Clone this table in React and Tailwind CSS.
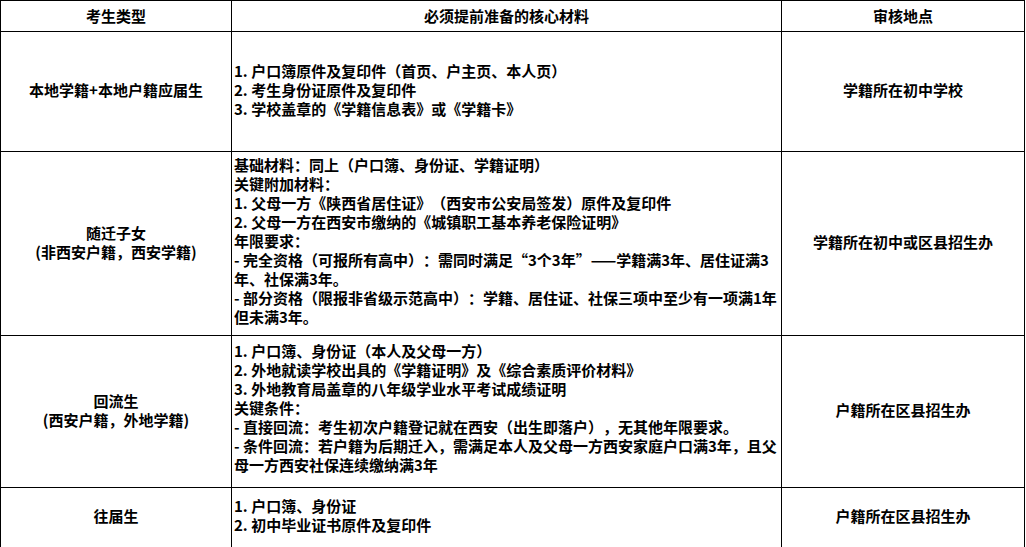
import React from "react";

const font = { fontFamily: '"Noto Sans CJK SC", "Microsoft YaHei", sans-serif' };

const rows = [
  {
    type: ["本地学籍+本地户籍应届生"],
    lines: [
      "1. 户口簿原件及复印件（首页、户主页、本人页）",
      "2. 考生身份证原件及复印件",
      "3. 学校盖章的《学籍信息表》或《学籍卡》",
    ],
    place: "学籍所在初中学校",
    cls: "pb-[4px]",
  },
  {
    type: ["随迁子女", "(非西安户籍，西安学籍)"],
    lines: [
      "基础材料：同上（户口簿、身份证、学籍证明）",
      "关键附加材料：",
      "1. 父母一方《陕西省居住证》（西安市公安局签发）原件及复印件",
      "2. 父母一方在西安市缴纳的《城镇职工基本养老保险证明》",
      "年限要求：",
      "- 完全资格（可报所有高中）：需同时满足“3个3年”——学籍满3年、居住证满3",
      "年、社保满3年。",
      "- 部分资格（限报非省级示范高中）：学籍、居住证、社保三项中至少有一项满1年",
      "但未满3年。",
    ],
    place: "学籍所在初中或区县招生办",
    cls: "pb-[6px]",
  },
  {
    type: ["回流生", "(西安户籍，外地学籍)"],
    lines: [
      "1. 户口簿、身份证（本人及父母一方）",
      "2. 外地就读学校出具的《学籍证明》及《综合素质评价材料》",
      "3. 外地教育局盖章的八年级学业水平考试成绩证明",
      "关键条件：",
      "- 直接回流：考生初次户籍登记就在西安（出生即落户），无其他年限要求。",
      "- 条件回流：若户籍为后期迁入，需满足本人及父母一方西安家庭户口满3年，且父",
      "母一方西安社保连续缴纳满3年",
    ],
    place: "户籍所在区县招生办",
    cls: "pb-[9px]",
  },
  {
    type: ["往届生"],
    lines: ["1. 户口簿、身份证", "2. 初中毕业证书原件及复印件"],
    place: "户籍所在区县招生办",
    cls: "pb-[5px]",
  },
];

export default function App() {
  return (
    <div className="w-[1026px] h-[547px] bg-white text-black" style={font}>
      <div className="grid w-[1025px] grid-cols-[232px_550px_243px] grid-rows-[31px_120px_184px_152px_60px] border-t border-black font-bold text-[15px] leading-[19px] [text-spacing-trim:space-all]">
        <div className="flex items-center justify-center border-l border-r border-b border-black pb-[2px]">考生类型</div>
        <div className="flex items-center justify-center border-r border-b border-black pb-[2px]">必须提前准备的核心材料</div>
        <div className="flex items-center justify-center border-r border-b border-black pb-[2px]">审核地点</div>
        {rows.map((r, i) => (
          <React.Fragment key={i}>
            <div className="flex flex-col items-center justify-center border-l border-r border-b border-black pb-[4px] text-center">
              {r.type.map((t, j) => (
                <div key={j}>{t}</div>
              ))}
            </div>
            <div className={`flex flex-col justify-center border-r border-b border-black pl-[2px] ${r.cls}`}>
              {r.lines.map((t, j) => (
                <div key={j} className="whitespace-nowrap">{t}</div>
              ))}
            </div>
            <div className="flex items-center justify-center border-r border-b border-black pb-[4px]">{r.place}</div>
          </React.Fragment>
        ))}
      </div>
    </div>
  );
}
